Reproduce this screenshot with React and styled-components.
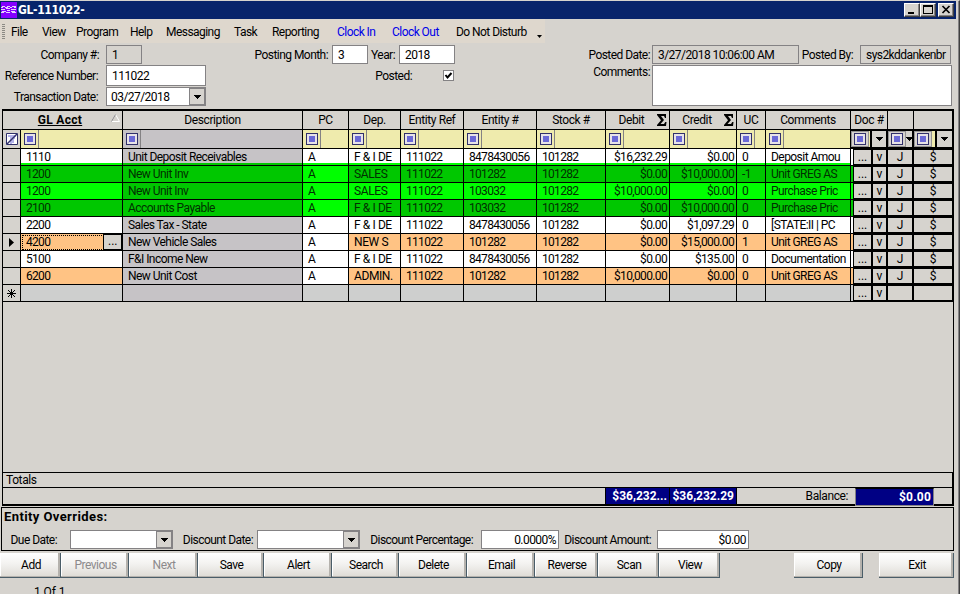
import React from "react";
import styled, { createGlobalStyle } from "styled-components";

const GlobalStyle = createGlobalStyle`
  * {
    box-sizing: border-box;
  }
  body {
    margin: 0;
    background: #d6d3ce;
    font-family: Roboto, "Liberation Sans", sans-serif;
    font-size: 12px;
    line-height: 14px;
    letter-spacing: -0.55px;
    color: #000;
  }
`;

const Window = styled.div`
  width: 960px;
  height: 594px;
  overflow: hidden;
  display: flex;
  flex-direction: column;
  background: #d6d3ce;
  border-top: 1px solid #d6d3ce;
  border-right: 1px solid #404040;
  box-shadow: inset -1px 0 #848284;
  white-space: nowrap;

  & > * {
    flex-shrink: 0;
  }
`;

const TitleBar = styled.div`
  display: flex;
  align-items: center;
  width: 956px;
  height: 18px;
  padding: 0 2px 0 1px;
  background: #08246b;
  color: #fff;
`;

const Title = styled.div`
  flex: 1;
  padding-left: 1px;
  font: bold 12px "DejaVu Sans Condensed", "DejaVu Sans", sans-serif;
  letter-spacing: -0.35px;
`;

const WindowButton = styled.button`
  display: flex;
  width: 16px;
  height: 14px;
  margin-left: ${(p) => p.$gap || 0}px;
  padding: 0;
  background: #d6d3ce;
  border: 1px solid;
  border-color: #fff #404040 #404040 #fff;
  box-shadow: inset -1px -1px #848284;
`;

const MenuBar = styled.div`
  display: flex;
  align-items: center;
  width: 545px;
  height: 24px;
  padding-top: 1px;
  background: #ded7cd;
`;

const Grip = styled.div`
  width: 3px;
  height: 16px;
  margin: 0 6px 0 2px;
  background: repeating-linear-gradient(#8c8a84 0 1px, transparent 1px 2px);
`;

const MenuItem = styled.div`
  width: ${(p) => p.$w}px;
  color: ${(p) => (p.$blue ? "#0000e8" : "#000")};
`;

const MoreArrow = styled.svg`
  margin-top: 9px;
`;

const Form = styled.div`
  display: flex;
  height: 66px;
  padding-top: 2px;
`;

const FormColumn = styled.div`
  display: flex;
  flex-direction: column;
  gap: 1px;
  width: ${(p) => p.$w}px;
`;

const FormRow = styled.div`
  display: flex;
  align-items: ${(p) => p.$align || "center"};
  height: ${(p) => p.$h || 19}px;
`;

const Label = styled.div`
  display: flex;
  flex: none;
  justify-content: flex-end;
  width: ${(p) => p.$w}px;
  padding-right: ${(p) => p.$pad ?? 4}px;
`;

const Field = styled.div`
  display: flex;
  align-items: center;
  justify-content: ${(p) => (p.$right ? "flex-end" : "flex-start")};
  width: ${(p) => p.$w}px;
  height: ${(p) => p.$h || 19}px;
  padding: 0 ${(p) => (p.$right ? 2 : 0)}px 0 ${(p) => p.$pl ?? 5}px;
  background: ${(p) => (p.$locked ? "#d6d3ce" : "#fff")};
  border: 1px solid #848284;
`;

const DropButton = styled.div`
  display: flex;
  align-items: center;
  justify-content: center;
  align-self: stretch;
  width: 16px;
  margin-left: auto;
  background: #d6d3ce;
  border: 1px solid #848284;
`;

const CheckBox = styled.div`
  display: flex;
  width: 11px;
  height: 11px;
  margin-left: 31px;
  background: #fff;
  border: 1px solid #848284;
`;

const Ledger = styled.div`
  display: flex;
  flex-direction: column;
  width: 952px;
  height: 397px;
  margin-left: 2px;
  border: solid #000;
  border-width: 2px 1px 2px 1px;
`;

const GridRow = styled.div`
  display: grid;
  grid-template-columns: 18px 102px 180px 46px 52px 63px 73px 69px 64px 67px 29px 85px 2px 20px 15px 26px 39px;
  height: ${(p) => p.$h || 17}px;
`;

const HeadCell = styled.div`
  display: flex;
  align-items: center;
  justify-content: center;
  position: relative;
  grid-column: span ${(p) => p.$span || 1};
  border: solid #000;
  border-width: 0 1px 1px 0;
  padding-right: ${(p) => p.$pr || 0}px;
  letter-spacing: ${(p) => p.$ls ?? -0.4}px;
  font-weight: ${(p) => (p.$bold ? 700 : 400)};
  text-decoration: ${(p) => (p.$bold ? "underline" : "none")};
`;

const Sum = styled.svg`
  position: absolute;
  right: 2px;
  top: 3px;
`;

const FilterCell = styled.div`
  display: flex;
  align-items: center;
  padding-left: 3px;
  overflow: hidden;
  background: ${(p) => p.$bg || "#efebad"};
  border: solid #000;
  border-width: 0 1px 1px 0;

  &::after {
    content: "";
    align-self: stretch;
    margin-left: 2px;
    border-left: 1px solid #848284;
  }
`;

const Target = styled.span`
  display: flex;
  align-items: center;
  justify-content: center;
  flex: none;
  width: 12px;
  height: 12px;
  border: 1px solid #31306b;
  background: #e7e3e7;

  &::after {
    content: "";
    width: 6px;
    height: 6px;
    background: #6b69d6;
  }
`;

const DocFilter = styled.div`
  display: flex;
  align-items: center;
  background: #efebad;
  border: solid #000;
  border-width: 1px ${(p) => (p.$end ? 2 : 1)}px 2px 0;
  grid-column: span ${(p) => p.$span || 1};
  overflow: hidden;
`;

const FilterPad = styled.div`
  display: flex;
  align-items: center;
  justify-content: center;
  align-self: stretch;
  flex: none;
  width: 18px;
  background: #d6d3ce;
  border: 1px solid #949294;
`;

const FilterDrop = styled.div`
  display: flex;
  align-items: center;
  justify-content: center;
  align-self: stretch;
  width: ${(p) => p.$w || 15}px;
  margin-left: auto;
  background: #d6d3ce;
  border-left: ${(p) => (p.$line ? "2px solid #000" : "0")};

  svg {
    flex: none;
  }
`;

const Cell = styled.div`
  display: flex;
  align-items: center;
  justify-content: ${(p) => (p.$right ? "flex-end" : "flex-start")};
  overflow: hidden;
  padding: 0 ${(p) => (p.$right ? 2 : 0)}px 0 5px;
  background: ${(p) => p.$bg};
  color: ${(p) => (p.$dim ? "#003000" : "#000")};
  border: solid #000;
  border-width: 0 1px 1px 0;
  letter-spacing: ${(p) => p.$ls ?? -0.55}px;
  box-shadow: ${(p) => (p.$lip ? `inset 0 -2px ${p.$lip}` : "none")};
  outline: ${(p) => (p.$focus ? "1px dotted #000" : "none")};
  outline-offset: -2px;
`;

const Selector = styled(Cell)`
  padding: 0;
  justify-content: center;
  background: #d6d3ce;
`;

const MoreButton = styled.div`
  align-self: stretch;
  width: 19px;
  margin-left: auto;
  padding-left: 4px;
  background: #d6d3ce;
  border: 1px solid #000;
  line-height: 13px;
  letter-spacing: 0;
  position: relative;
  z-index: 1;
`;

const Strip = styled.div`
  background: ${(p) => p.$bg};
  border-bottom: 1px solid #000;
`;

const ButtonCell = styled.div`
  display: flex;
  align-items: center;
  justify-content: center;
  background: #d6d3ce;
  border: solid #000;
  border-width: 1px ${(p) => p.$r ?? 2}px 2px ${(p) => p.$l ?? 0}px;
  letter-spacing: 0;
`;

const GridSpace = styled.div`
  flex: 1;
`;

const TotalsTitle = styled.div`
  height: 16px;
  padding-left: 3px;
  border: solid #000;
  border-width: 1px 1px 1px 0;
  letter-spacing: -0.4px;
`;

const TotalsRow = styled.div`
  display: flex;
  height: 16px;
  padding-left: 602px;
  border-right: 1px solid #000;
`;

const Total = styled.div`
  width: ${(p) => p.$w}px;
  padding-right: 2px;
  background: #000084;
  color: #fff;
  border: solid #000;
  border-width: 0 1px 0 ${(p) => p.$l || 0}px;
  text-align: right;
  line-height: 17px;
  font-weight: 700;
  letter-spacing: 0;
`;

const BalanceLabel = styled.div`
  flex: 1;
  padding-right: 7px;
  text-align: right;
  line-height: 17px;
  letter-spacing: -0.4px;
`;

const Balance = styled.div`
  width: 79px;
  height: 18px;
  margin-right: 18px;
  padding-right: 2px;
  background: #000084;
  border: 1px solid #848284;
  border-top-color: #000;
  color: #fff;
  font-weight: 700;
  text-align: right;
  line-height: 17px;
  letter-spacing: 0.2px;
`;

const Overrides = styled.div`
  width: 953px;
  height: 44px;
  margin: 1px 0 0 1px;
  border: 1px solid #000;
`;

const OverridesTitle = styled.div`
  padding-left: 2px;
  height: 21px;
  font-size: 13px;
  font-weight: 700;
  line-height: 17px;
  letter-spacing: 0.4px;
`;

const OverridesRow = styled.div`
  display: flex;
  align-items: center;
  height: 21px;
`;

const Actions = styled.div`
  display: flex;
  height: 25px;
  margin-top: 2px;
`;

const ActionButton = styled.button`
  width: ${(p) => p.$w}px;
  margin-left: ${(p) => p.$gap || 0}px;
  padding: 0 0 0 2px;
  background: linear-gradient(#ffffff, #f3f2f0 45%, #dedbd5);
  border: solid #4a5d68;
  border-width: 0 1px 1px 0;
  box-shadow: inset -2px -1px #b5b2ad, inset 1px 0 #fff;
  font: 12px Roboto, sans-serif;
  letter-spacing: -0.5px;
  color: ${(p) => (p.$off ? "#8c8a8c" : "#000")};
`;

const Status = styled.div`
  padding: 7px 0 0 34px;
  letter-spacing: -0.1px;
`;

const Down = () => (
  <svg width="7" height="4" viewBox="0 0 7 4" shapeRendering="crispEdges">
    <path d="M0 0h7v1H0zM1 1h5v1H1zM2 2h3v1H2zM3 3h1v1H3z" />
  </svg>
);

const Sigma = () => (
  <Sum width="10" height="12" viewBox="0 0 10 12">
    <path d="M0 0H9V4H8L7 2H4L7 6L3.5 10H7L8.3 8H9.5L9 12H0V11L4 6.2L0 1Z" />
  </Sum>
);

const ORANGE = "#ffc384";
const LIME = "#00ff00";
const GREEN = "#00c700";
const GREY = "#c6c3c6";

const rows = [
  ["1110", "Unit Deposit Receivables", "F & I DE", "8478430056", "$16,232.29", "$0.00", "0", "Deposit Amou", "#fff"],
  ["1200", "New Unit Inv", "SALES", "101282", "$0.00", "$10,000.00", "-1", "Unit GREG AS", GREEN],
  ["1200", "New Unit Inv", "SALES", "103032", "$10,000.00", "$0.00", "0", "Purchase Pric", LIME],
  ["2100", "Accounts Payable", "F & I DE", "103032", "$0.00", "$10,000.00", "0", "Purchase Pric", GREEN],
  ["2200", "Sales Tax - State", "F & I DE", "8478430056", "$0.00", "$1,097.29", "0", "[STATE:II | PC", "#fff"],
  ["4200", "New Vehicle Sales", "NEW S", "101282", "$0.00", "$15,000.00", "1", "Unit GREG AS", ORANGE],
  ["5100", "F&I Income New", "F & I DE", "8478430056", "$0.00", "$135.00", "0", "Documentation", "#fff"],
  ["6200", "New Unit Cost", "ADMIN.", "101282", "$10,000.00", "$0.00", "0", "Unit GREG AS", ORANGE],
];

const menu = [
  ["File", 31],
  ["View", 34],
  ["Program", 54],
  ["Help", 36],
  ["Messaging", 68],
  ["Task", 38],
  ["Reporting", 65],
  ["Clock In", 55, true],
  ["Clock Out", 64, true],
  ["Do Not Disturb", 81],
];

const actions = [
  ["Add", 61],
  ["Previous", 68, true],
  ["Next", 69, true],
  ["Save", 66],
  ["Alert", 68],
  ["Search", 67],
  ["Delete", 68],
  ["Email", 68],
  ["Reverse", 63],
  ["Scan", 61],
  ["View", 61],
];

const LedgerRow = ({ row, index }) => {
  const [acct, desc, dep, entity, debit, credit, uc, comment, bg] = row;
  const green = bg === GREEN || bg === LIME;
  const common = { $bg: bg, $dim: green, $lip: index === 0 ? LIME : null };
  const active = index === 5;
  return (
    <GridRow>
      <Selector>
        {active && (
          <svg width="5" height="9" viewBox="0 0 5 9">
            <path d="M0 0L5 4.5L0 9Z" />
          </svg>
        )}
      </Selector>
      <Cell {...common} $ls={-0.7} $focus={active}>
        {acct}
        {active && <MoreButton>...</MoreButton>}
      </Cell>
      <Cell {...common} $bg={green ? GREEN : GREY} $lip={index === 0 ? GREEN : null}>
        {desc}
      </Cell>
      <Cell {...common} $bg={green ? LIME : "#fff"}>
        A
      </Cell>
      <Cell {...common} $ls={-0.4}>{dep}</Cell>
      <Cell {...common} $ls={-0.7}>111022</Cell>
      <Cell {...common} $ls={-0.7}>{entity}</Cell>
      <Cell {...common} $ls={-0.7}>101282</Cell>
      <Cell {...common} $ls={-0.65} $right>
        {debit}
      </Cell>
      <Cell {...common} $ls={-0.65} $right>
        {credit}
      </Cell>
      <Cell {...common}>{uc}</Cell>
      <Cell {...common}>{comment}</Cell>
      <Strip $bg={bg} />
      <ButtonCell $l={1}>...</ButtonCell>
      <ButtonCell>v</ButtonCell>
      <ButtonCell>J</ButtonCell>
      <ButtonCell $r={1}>$</ButtonCell>
    </GridRow>
  );
};

const App = () => {
  return (
    <Window>
      <GlobalStyle />
      <TitleBar>
        <svg width="16" height="16" viewBox="0 0 16 16">
          <path fill="#8400ff" d="M0 0h16v16H0z" />
          <path
            stroke="#e7cfff"
            fill="none"
            d="M1 4.5h3M6 4.5h3M11 4.5h4M0 5.5h2M4 5.5h3M9 5.5h2M13 5.5h2M0 7.5h4M5 6.5h4M10 7.5h5M1 9.5h4M6 8.5h3M10 9.5h4M0 10.5h3M5 10.5h4M11 10.5h4"
          />
        </svg>
        <Title>GL-111022-</Title>
        <WindowButton>
          <svg width="12" height="11">
            <path d="M3 8h6v2H3z" />
          </svg>
        </WindowButton>
        <WindowButton>
          <svg width="13" height="11">
            <path d="M2 1h10v9H2zM3 3v6h8V3z" fillRule="evenodd" />
          </svg>
        </WindowButton>
        <WindowButton $gap={2}>
          <svg width="13" height="11">
            <path d="M3.5 2L10.5 9M10.5 2L3.5 9" stroke="#000" strokeWidth="1.7" />
          </svg>
        </WindowButton>
      </TitleBar>

      <MenuBar>
        <Grip />
        {menu.map(([text, w, blue]) => (
          <MenuItem key={text} $w={w} $blue={blue}>
            {text}
          </MenuItem>
        ))}
        <MoreArrow width="5" height="3">
          <path d="M0 0h5L2.5 3Z" />
        </MoreArrow>
      </MenuBar>

      <Form>
        <FormColumn $w={206}>
          <FormRow>
            <Label $w={106} $pad={7}>Company #:</Label>
            <Field $w={36} $locked>1</Field>
          </FormRow>
          <FormRow $h={21}>
            <Label $w={106} $pad={8}>Reference Number:</Label>
            <Field $w={100} $h={21}>111022</Field>
          </FormRow>
          <FormRow>
            <Label $w={106} $pad={8}>Transaction Date:</Label>
            <Field $w={100} $pl={4}>
              03/27/2018
              <DropButton>
                <Down />
              </DropButton>
            </Field>
          </FormRow>
        </FormColumn>
        <FormColumn $w={383}>
          <FormRow>
            <Label $w={126}>Posting Month:</Label>
            <Field $w={36}>3</Field>
            <Label $w={31}>Year:</Label>
            <Field $w={56}>2018</Field>
          </FormRow>
          <FormRow $h={21}>
            <Label $w={206} $pad={0}>Posted:</Label>
            <CheckBox>
              <svg width="9" height="9">
                <path d="M1.5 4L3.5 6.5L7.5 2" fill="none" stroke="#000" strokeWidth="2" />
              </svg>
            </CheckBox>
          </FormRow>
        </FormColumn>
        <FormColumn $w={365}>
          <FormRow>
            <Label $w={63} $pad={2}>Posted Date:</Label>
            <Field $w={147} $locked>3/27/2018 10:06:00 AM</Field>
            <Label $w={61} $pad={7}>Posted By:</Label>
            <Field $w={91} $locked>sys2kddankenbr</Field>
          </FormRow>
          <FormRow $h={41} $align="flex-start">
            <Label $w={63} $pad={2}>Comments:</Label>
            <Field $w={300} $h={41} />
          </FormRow>
        </FormColumn>
      </Form>

      <Ledger>
        <GridRow $h={19}>
          <HeadCell $bold $span={2} $pr={5} $ls={0.3}>
            GL Acct
            <Sum width="9" height="8" viewBox="0 0 9 8">
              <path d="M4.5 0.5L8.5 7.5H0.5Z" fill="#d6d3ce" stroke="#fff" />
              <path d="M4.5 0.5L0.5 7.5" stroke="#848284" />
            </Sum>
          </HeadCell>
          <HeadCell>Description</HeadCell>
          <HeadCell>PC</HeadCell>
          <HeadCell>Dep.</HeadCell>
          <HeadCell>Entity Ref</HeadCell>
          <HeadCell>Entity #</HeadCell>
          <HeadCell>Stock #</HeadCell>
          <HeadCell $pr={12}>Debit<Sigma /></HeadCell>
          <HeadCell $pr={12}>Credit<Sigma /></HeadCell>
          <HeadCell>UC</HeadCell>
          <HeadCell>Comments</HeadCell>
          <HeadCell $span={3}>Doc #</HeadCell>
          <HeadCell />
          <HeadCell />
        </GridRow>
        <GridRow $h={19}>
          <Selector>
            <svg width="12" height="12" viewBox="0 0 12 12">
              <path fill="#fff" stroke="#31306b" d="M.5 .5h11v11H.5z" />
              <path fill="none" stroke="#6b69d6" d="M2 3h8M4 5h5M5 6v5M7 6v4" />
              <path stroke="#31306b" strokeWidth="1.5" d="M1 11L11 1" />
            </svg>
          </Selector>
          {[0, 1, 2, 3, 4, 5, 6, 7, 8, 9, 10].map((i) => (
            <FilterCell key={i} $bg={i === 1 ? GREY : undefined}>
              <Target />
            </FilterCell>
          ))}
          <DocFilter $span={3} $end>
            <FilterPad><Target /></FilterPad>
            <FilterDrop $w={16} $line><Down /></FilterDrop>
          </DocFilter>
          <DocFilter $end>
            <FilterPad><Target /></FilterPad>
            <FilterDrop $w={6}><Down /></FilterDrop>
          </DocFilter>
          <DocFilter>
            <FilterPad><Target /></FilterPad>
            <FilterDrop $w={17} $line><Down /></FilterDrop>
          </DocFilter>
        </GridRow>
        {rows.map((row, i) => (
          <LedgerRow key={i} row={row} index={i} />
        ))}
        <GridRow>
          <Selector>
            <svg width="9" height="9">
              <path d="M4.5 0v9M0 4.5h9M1 1l7 7M8 1l-7 7" stroke="#000" />
            </svg>
          </Selector>
          {[0, 1, 2, 3, 4, 5, 6, 7, 8, 9, 10].map((i) => (
            <Cell key={i} $bg={i === 1 ? GREY : "#cecfce"} />
          ))}
          <Strip $bg="#cecfce" />
          <ButtonCell $l={1}>...</ButtonCell>
          <ButtonCell>v</ButtonCell>
          <ButtonCell />
          <ButtonCell $r={1} />
        </GridRow>
        <GridSpace />
        <TotalsTitle>Totals</TotalsTitle>
        <TotalsRow>
          <Total $w={65} $l={1}>$36,232...</Total>
          <Total $w={67}>$36,232.29</Total>
          <BalanceLabel>Balance:</BalanceLabel>
          <Balance>$0.00</Balance>
        </TotalsRow>
      </Ledger>

      <Overrides>
        <OverridesTitle>Entity Overrides:</OverridesTitle>
        <OverridesRow>
          <Label $w={68} $pad={13}>Due Date:</Label>
          <Field $w={103}>
            <DropButton><Down /></DropButton>
          </Field>
          <Label $w={84} $pad={4}>Discount Date:</Label>
          <Field $w={103}>
            <DropButton><Down /></DropButton>
          </Field>
          <Label $w={121} $pad={8}>Discount Percentage:</Label>
          <Field $w={78} $right>0.0000%</Field>
          <Label $w={98} $pad={6}>Discount Amount:</Label>
          <Field $w={92} $right>$0.00</Field>
        </OverridesRow>
      </Overrides>

      <Actions>
        {actions.map(([text, w, off]) => (
          <ActionButton key={text} $w={w} $off={off}>
            {text}
          </ActionButton>
        ))}
        <ActionButton $w={69} $gap={74}>Copy</ActionButton>
        <ActionButton $w={75} $gap={16}>Exit</ActionButton>
      </Actions>
      <Status>1 Of 1</Status>
    </Window>
  );
};

export default App;
